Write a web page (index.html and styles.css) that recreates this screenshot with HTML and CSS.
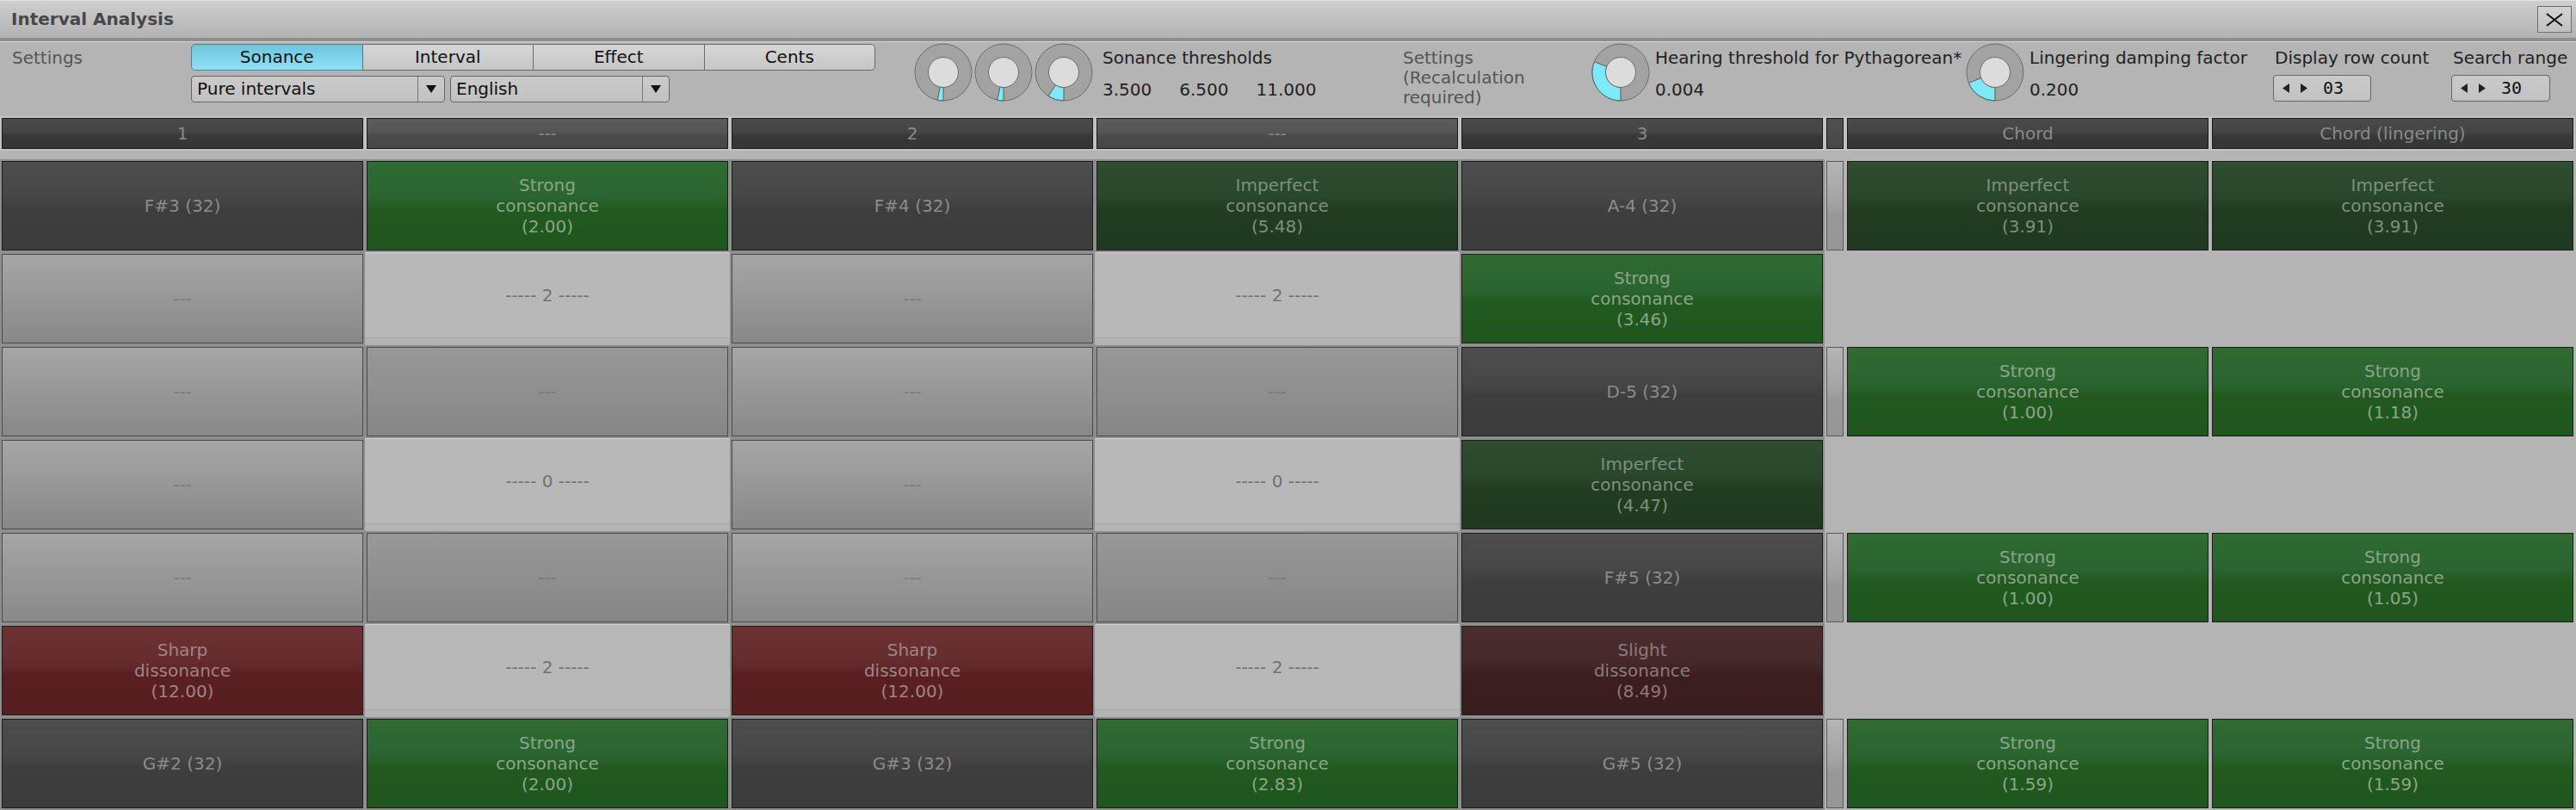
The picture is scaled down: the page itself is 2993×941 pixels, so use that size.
FILE: index.html
```html
<!DOCTYPE html>
<html>
<head>
<meta charset="utf-8">
<title>Interval Analysis</title>
<link rel="stylesheet" href="styles.css">
</head>
<body>
<div class="win">
  <div class="titlebar">
    <span class="title">Interval Analysis</span>
    <div class="close"><svg width="20" height="16" viewBox="0 0 20 16"><path d="M1 1 L19 15 M19 1 L1 15" stroke="#111" stroke-width="2" fill="none"/></svg></div>
  </div>

  <div class="panel">
    <div class="p-settings">Settings</div>
    <div class="modes">
      <div class="tabs">
        <div class="tab on">Sonance</div>
        <div class="tab">Interval</div>
        <div class="tab">Effect</div>
        <div class="tab">Cents</div>
      </div>
      <div class="drops">
        <div class="drop d1"><span class="dt">Pure intervals</span><span class="da"><svg width="12" height="9" viewBox="0 0 12 9"><polygon points="0,0 12,0 6,9" fill="#111"/></svg></span></div>
        <div class="drop d2"><span class="dt">English</span><span class="da"><svg width="12" height="9" viewBox="0 0 12 9"><polygon points="0,0 12,0 6,9" fill="#111"/></svg></span></div>
      </div>
    </div>

    <div class="knobs">
      <svg class="knob" width="70" height="68" viewBox="0 0 70 68">
        <circle cx="35" cy="34" r="33" fill="#a3a3a3" stroke="#6c6c6c" stroke-width="1"/>
        <path d="M35 67 A33 33 0 0 1 28.14 66.28 L31.36 51.12 A17.5 17.5 0 0 0 35 51.5 Z" fill="#7de9fb" stroke="#5a5a5a" stroke-width="1"/>
        <circle cx="35" cy="34" r="17.5" fill="#dcdcdc" stroke="#6c6c6c" stroke-width="1"/>
      </svg>
      <svg class="knob" width="70" height="68" viewBox="0 0 70 68">
        <circle cx="35" cy="34" r="33" fill="#a3a3a3" stroke="#6c6c6c" stroke-width="1"/>
        <path d="M35 67 A33 33 0 0 1 27.58 66.15 L31.06 51.05 A17.5 17.5 0 0 0 35 51.5 Z" fill="#7de9fb" stroke="#5a5a5a" stroke-width="1"/>
        <circle cx="35" cy="34" r="17.5" fill="#dcdcdc" stroke="#6c6c6c" stroke-width="1"/>
      </svg>
      <svg class="knob" width="70" height="68" viewBox="0 0 70 68">
        <circle cx="35" cy="34" r="33" fill="#a3a3a3" stroke="#6c6c6c" stroke-width="1"/>
        <path d="M35 67 A33 33 0 0 1 17.03 61.68 L25.47 48.68 A17.5 17.5 0 0 0 35 51.5 Z" fill="#7de9fb" stroke="#5a5a5a" stroke-width="1"/>
        <circle cx="35" cy="34" r="17.5" fill="#dcdcdc" stroke="#6c6c6c" stroke-width="1"/>
      </svg>
    </div>
    <div class="thr">
      <div class="lbl">Sonance thresholds</div>
      <div class="vals"><span>3.500</span><span>6.500</span><span>11.000</span></div>
    </div>
    <div class="recalc">Settings<br>(Recalculation<br>required)</div>

    <svg class="knob kh" width="70" height="68" viewBox="0 0 70 68">
      <circle cx="35" cy="34" r="33" fill="#a3a3a3" stroke="#6c6c6c" stroke-width="1"/>
      <path d="M35 67 A33 33 0 0 1 4.40 21.64 L18.77 27.44 A17.5 17.5 0 0 0 35 51.5 Z" fill="#7de9fb" stroke="#5a5a5a" stroke-width="1"/>
      <circle cx="35" cy="34" r="17.5" fill="#dcdcdc" stroke="#6c6c6c" stroke-width="1"/>
    </svg>
    <div class="kl hear">
      <div class="lbl">Hearing threshold for Pythagorean*</div>
      <div class="val">0.004</div>
    </div>
    <svg class="knob kl2" width="70" height="68" viewBox="0 0 70 68">
      <circle cx="35" cy="34" r="33" fill="#a3a3a3" stroke="#6c6c6c" stroke-width="1"/>
      <path d="M35 67 A33 33 0 0 1 4.40 46.36 L18.77 40.56 A17.5 17.5 0 0 0 35 51.5 Z" fill="#7de9fb" stroke="#5a5a5a" stroke-width="1"/>
      <circle cx="35" cy="34" r="17.5" fill="#dcdcdc" stroke="#6c6c6c" stroke-width="1"/>
    </svg>
    <div class="kl ling">
      <div class="lbl">Lingering damping factor</div>
      <div class="val">0.200</div>
    </div>

    <div class="sg-disp">
      <div class="lbl">Display row count</div>
      <div class="spin s1"><svg width="29" height="11" viewBox="0 0 29 11"><polygon points="0,5.5 8,0 8,11" fill="#222"/><polygon points="21,0 29,5.5 21,11" fill="#222"/></svg><span class="num">03</span></div>
    </div>
    <div class="sg-search">
      <div class="lbl">Search range</div>
      <div class="spin s2"><svg width="29" height="11" viewBox="0 0 29 11"><polygon points="0,5.5 8,0 8,11" fill="#222"/><polygon points="21,0 29,5.5 21,11" fill="#222"/></svg><span class="num">30</span></div>
    </div>
  </div>

  <div class="hdr">
    <div class="hw"><div class="h">1</div></div>
    <div class="hw"><div class="h hl">---</div></div>
    <div class="hw"><div class="h">2</div></div>
    <div class="hw"><div class="h hl">---</div></div>
    <div class="hw"><div class="h">3</div></div>
    <div class="hw"><div class="h hn"></div></div>
    <div class="hw"><div class="h">Chord</div></div>
    <div class="hw"><div class="h">Chord (lingering)</div></div>
  </div>

  <div class="rows">
    <!-- row 1 -->
    <div class="w"><div class="c note">F#3 (32)</div></div>
    <div class="w"><div class="c sg">Strong<br>consonance<br>(2.00)</div></div>
    <div class="w"><div class="c note">F#4 (32)</div></div>
    <div class="w"><div class="c ig">Imperfect<br>consonance<br>(5.48)</div></div>
    <div class="w"><div class="c note">A-4 (32)</div></div>
    <div class="w n"><div class="c bar"></div></div>
    <div class="w x"><div class="c ig">Imperfect<br>consonance<br>(3.91)</div></div>
    <div class="w x"><div class="c ig">Imperfect<br>consonance<br>(3.91)</div></div>
    <!-- row 2 -->
    <div class="w"><div class="c e1">---</div></div>
    <div class="w s"><div class="c sep">----- 2 -----</div></div>
    <div class="w"><div class="c e1">---</div></div>
    <div class="w s"><div class="c sep">----- 2 -----</div></div>
    <div class="w"><div class="c sg">Strong<br>consonance<br>(3.46)</div></div>
    <div class="w n"></div>
    <div class="w x"></div>
    <div class="w x"></div>
    <!-- row 3 -->
    <div class="w"><div class="c e1">---</div></div>
    <div class="w"><div class="c e2">---</div></div>
    <div class="w"><div class="c e1">---</div></div>
    <div class="w"><div class="c e2">---</div></div>
    <div class="w"><div class="c note">D-5 (32)</div></div>
    <div class="w n"><div class="c bar"></div></div>
    <div class="w x"><div class="c sg">Strong<br>consonance<br>(1.00)</div></div>
    <div class="w x"><div class="c sg">Strong<br>consonance<br>(1.18)</div></div>
    <!-- row 4 -->
    <div class="w"><div class="c e1">---</div></div>
    <div class="w s"><div class="c sep">----- 0 -----</div></div>
    <div class="w"><div class="c e1">---</div></div>
    <div class="w s"><div class="c sep">----- 0 -----</div></div>
    <div class="w"><div class="c ig">Imperfect<br>consonance<br>(4.47)</div></div>
    <div class="w n"></div>
    <div class="w x"></div>
    <div class="w x"></div>
    <!-- row 5 -->
    <div class="w"><div class="c e1">---</div></div>
    <div class="w"><div class="c e2">---</div></div>
    <div class="w"><div class="c e1">---</div></div>
    <div class="w"><div class="c e2">---</div></div>
    <div class="w"><div class="c note">F#5 (32)</div></div>
    <div class="w n"><div class="c bar"></div></div>
    <div class="w x"><div class="c sg">Strong<br>consonance<br>(1.00)</div></div>
    <div class="w x"><div class="c sg">Strong<br>consonance<br>(1.05)</div></div>
    <!-- row 6 -->
    <div class="w"><div class="c sr">Sharp<br>dissonance<br>(12.00)</div></div>
    <div class="w s"><div class="c sep">----- 2 -----</div></div>
    <div class="w"><div class="c sr">Sharp<br>dissonance<br>(12.00)</div></div>
    <div class="w s"><div class="c sep">----- 2 -----</div></div>
    <div class="w"><div class="c sd">Slight<br>dissonance<br>(8.49)</div></div>
    <div class="w n"></div>
    <div class="w x"></div>
    <div class="w x"></div>
    <!-- row 7 -->
    <div class="w"><div class="c note">G#2 (32)</div></div>
    <div class="w"><div class="c sg">Strong<br>consonance<br>(2.00)</div></div>
    <div class="w"><div class="c note">G#3 (32)</div></div>
    <div class="w"><div class="c sg">Strong<br>consonance<br>(2.83)</div></div>
    <div class="w"><div class="c note">G#5 (32)</div></div>
    <div class="w n"><div class="c bar"></div></div>
    <div class="w x"><div class="c sg">Strong<br>consonance<br>(1.59)</div></div>
    <div class="w x"><div class="c sg">Strong<br>consonance<br>(1.59)</div></div>
  </div>
</div>
</body>
</html>
```

FILE: styles.css
```css
html, body {
  margin: 0;
  padding: 0;
}
body {
  width: 2993px;
  height: 941px;
  overflow: hidden;
  background: #b4b4b4;
  font-family: "DejaVu Sans", "Noto Sans", sans-serif;
  font-size: 20px;
  color: #222;
}
.win {
  width: 2993px;
  height: 941px;
}

/* title bar */
.titlebar {
  box-sizing: border-box;
  height: 48px;
  display: flex;
  align-items: center;
  justify-content: space-between;
  padding: 0 5px 4px 13px;
  border-top: 1px solid #e2e2e2;
  border-bottom: 4px solid #8e8e8e;
  background: linear-gradient(#cecece, #b2b2b2);
}
.title {
  font-weight: bold;
  font-size: 20px;
  color: #474747;
  line-height: 23px;
  padding-top: 4px;
}
.close {
  box-sizing: border-box;
  width: 40px;
  height: 31px;
  margin-top: 4px;
  border: 1px solid #6e6e6e;
  background: linear-gradient(#d2d2d2, #c2c2c2);
  display: flex;
  align-items: center;
  justify-content: center;
}

/* settings panel */
.panel {
  box-sizing: border-box;
  height: 87px;
  border-top: 1px solid #d6d6d6;
  display: flex;
  align-items: flex-start;
  line-height: 23px;
  white-space: nowrap;
}
.p-settings {
  width: 208px;
  padding-left: 14px;
  padding-top: 7px;
  color: #555;
}
.modes {
  width: 795px;
  padding-top: 2px;
}
.tabs {
  display: flex;
  height: 31px;
}
.tab {
  flex: 1;
  box-sizing: border-box;
  border: 1px solid #6a6a6a;
  margin-left: -1px;
  background: linear-gradient(#d6d6d6, #c6c6c6);
  color: #111;
  display: flex;
  align-items: center;
  justify-content: center;
}
.tab:first-child {
  margin-left: 0;
  border-radius: 5px 0 0 5px;
}
.tab:last-child {
  border-radius: 0 5px 5px 0;
}
.tab.on {
  background: linear-gradient(#6cc5da, #8fe2f6);
  border-color: #557f8c;
}
.drops {
  display: flex;
  gap: 6px;
  margin-top: 6px;
}
.drop {
  box-sizing: border-box;
  height: 31px;
  border: 1px solid #666;
  border-radius: 4px;
  background: linear-gradient(#cbcbcb, #c1c1c1);
  display: flex;
  color: #111;
}
.d1 { width: 295px; }
.d2 { width: 255px; }
.dt {
  flex: 1;
  padding-left: 6px;
  line-height: 29px;
}
.da {
  width: 30px;
  border-left: 1px solid #777;
  display: flex;
  align-items: center;
  justify-content: center;
}

.knobs {
  display: flex;
  margin-left: 44px;
  margin-right: 10px;
}
.knob {
  display: block;
  margin-top: 1px;
}
.thr {
  width: 349px;
  padding-top: 7px;
}
.vals {
  margin-top: 14px;
  display: flex;
}
.vals span {
  margin-right: 32px;
}
.recalc {
  width: 218px;
  padding-top: 7px;
  color: #555;
}
.kl {
  padding-top: 7px;
  margin-left: 5px;
}
.hear { width: 360px; }
.ling { width: 283px; }
.val {
  margin-top: 14px;
}
.sg-disp {
  width: 207px;
  padding-top: 7px;
}
.sg-search {
  padding-top: 7px;
}
.lbl {
  color: #222;
}
.sg-disp .lbl, .sg-search .lbl {
  padding-left: 2px;
}
.spin {
  box-sizing: border-box;
  height: 31px;
  margin-top: 8px;
  border: 1px solid #666;
  border-radius: 4px;
  background: linear-gradient(#cacaca, #c2c2c2);
  display: flex;
  align-items: center;
  padding-left: 10px;
}
.s1 { width: 114px; }
.s2 { width: 115px; }
.num {
  font-family: "DejaVu Sans Mono", monospace;
  color: #111;
  margin-left: 18px;
}

/* grid */
.hdr, .rows {
  display: grid;
  grid-template-columns: repeat(5, 424px) 24px 424px 424px;
}
.hdr {
  height: 40px;
  margin-bottom: 10px;
}
.rows {
  grid-auto-rows: 108px;
}
.hw {
  padding: 2px;
  background: #c2c2c2;
}
.h {
  box-sizing: border-box;
  height: 100%;
  border: 1px solid #1a1a1a;
  background: linear-gradient(#4b4b4b, #444 45%, #383838 60%, #353535);
  color: #8a8a8a;
  display: flex;
  align-items: center;
  justify-content: center;
}
.h.hl {
  background: linear-gradient(#5c5c5c, #555 45%, #4a4a4a 60%, #474747);
}
.h.hn {
  background: linear-gradient(#505050, #484848);
}

.w {
  padding: 2px;
  background: #8e8e8e;
}
.w.x, .w.n {
  background: transparent;
}
.w.s {
  padding: 0 0 8px 0;
  background: transparent;
}
.c {
  box-sizing: border-box;
  height: 100%;
  border: 1px solid #1c1c1c;
  display: flex;
  align-items: center;
  justify-content: center;
  text-align: center;
  line-height: 24px;
  font-size: 20px;
}
.note {
  background: linear-gradient(#4d4d4d, #474747 40%, #3e3e3e 55%, #3c3c3c);
  color: #8c8c8c;
}
.sg {
  background: linear-gradient(#306b32, #2b6430 40%, #21591f 55%, #1f561e);
  color: #89a689;
}
.ig {
  background: linear-gradient(#2f4d31, #2a462b 40%, #213c21 55%, #1f3a20);
  color: #7c917c;
}
.sr {
  background: linear-gradient(#6c3133, #652c2e 40%, #5a2021 55%, #561e1f);
  color: #a08384;
}
.sd {
  background: linear-gradient(#4c2d2f, #46292b 40%, #3c1e20 55%, #3a1d1f);
  color: #8d7b7c;
}
.e1 {
  background: linear-gradient(#a6a6a6, #888);
  border-color: #4a4a4a;
  color: #777;
}
.e2 {
  background: linear-gradient(#989898, #868686);
  border-color: #4a4a4a;
  color: #777;
}
.sep {
  border: none;
  border-top: 1px solid #d4d4d4;
  border-bottom: 1px solid #a6a6a6;
  background: #b8b8b8;
  color: #717171;
}
.bar {
  background: linear-gradient(#b4b4b4, #a4a4a4 45%, #989898 60%, #969696);
  border-color: #5a5a5a;
}
```
